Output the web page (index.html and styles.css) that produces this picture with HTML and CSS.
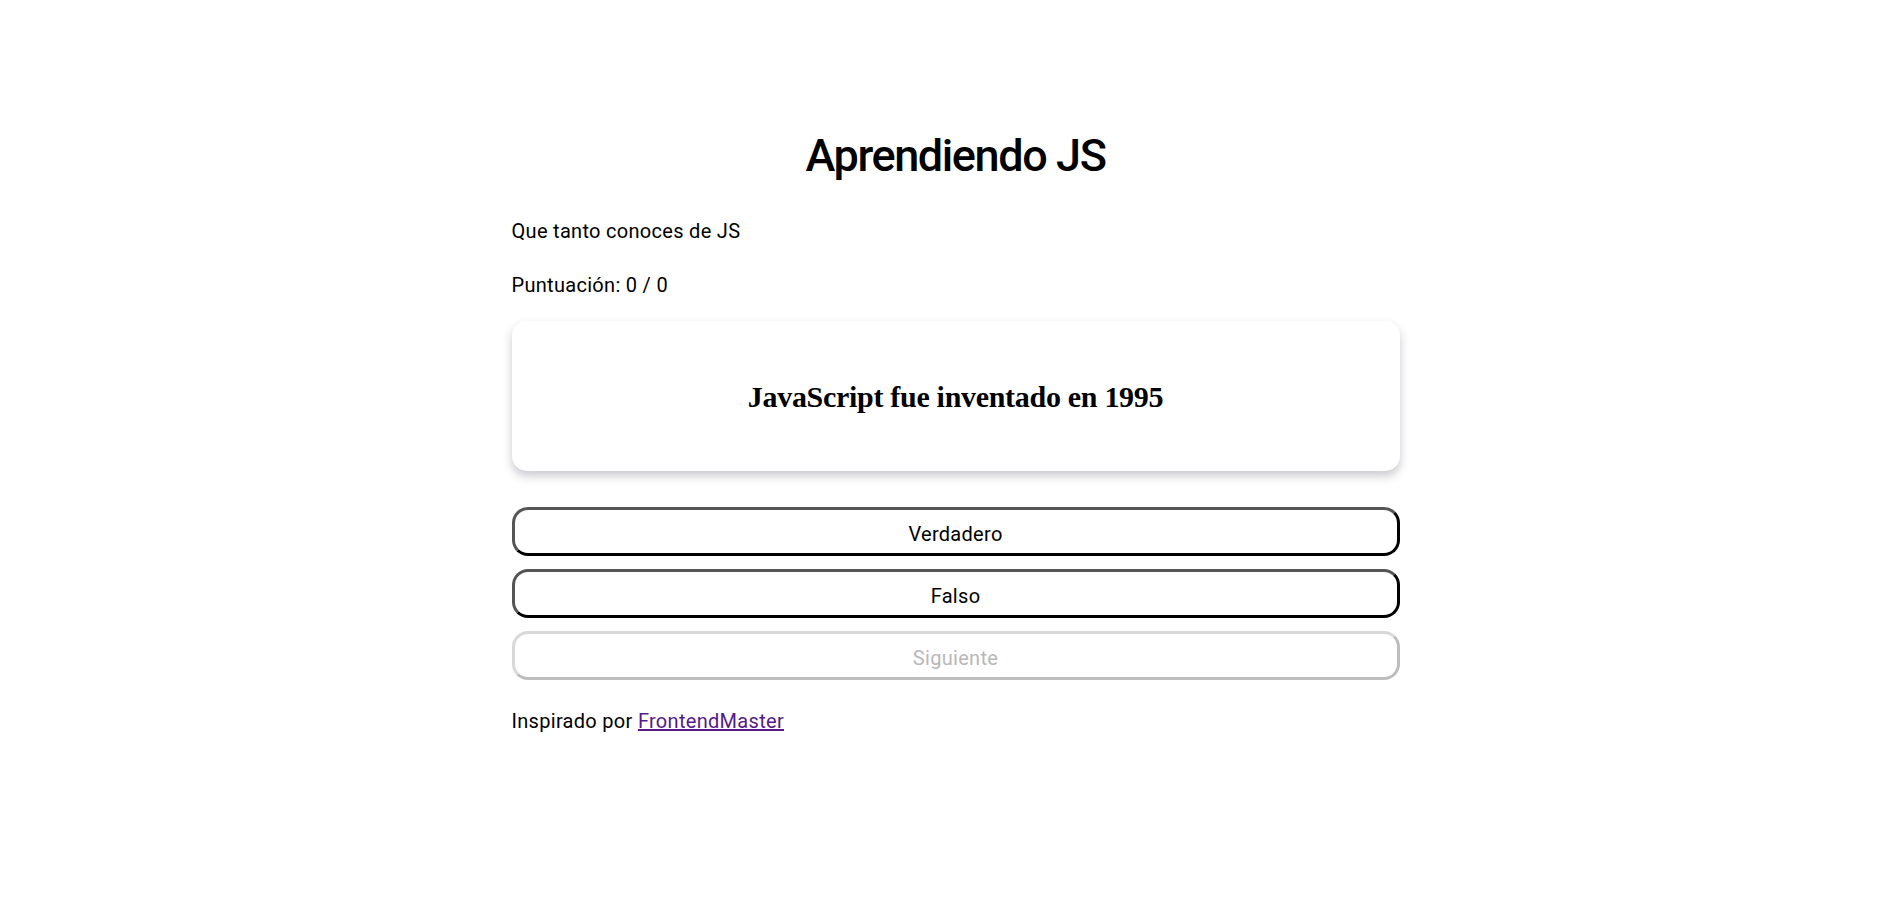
FILE: index.html
```html
<!DOCTYPE html>
<html lang="es">
<head>
<meta charset="utf-8">
<title>Aprendiendo JS</title>
<link rel="stylesheet" href="styles.css">
</head>
<body>
<main class="quiz">
  <h1 class="quiz-title">Aprendiendo JS</h1>
  <p class="quiz-subtitle">Que tanto conoces de JS</p>
  <p class="quiz-score">Puntuación: 0 / 0</p>
  <section class="question-card">
    <h2 class="question-text">JavaScript fue inventado en 1995</h2>
  </section>
  <div class="actions">
    <button class="btn">Verdadero</button>
    <button class="btn">Falso</button>
    <button class="btn" disabled>Siguiente</button>
  </div>
  <p class="credit">Inspirado por <a class="credit-link" href="#">FrontendMaster</a></p>
</main>
</body>
</html>
```

FILE: styles.css
```css
html, body {
  background: #ffffff;
}
body {
  margin: 0;
  padding-left: 8px;
  font-family: Roboto, "Noto Sans", sans-serif;
  color: #000;
}
.quiz {
  width: 888px;
  margin: 0 auto;
  display: flex;
  flex-direction: column;
}
.quiz-title {
  margin: 128px 0 0;
  font-size: 45px;
  line-height: 56px;
  font-weight: 500;
  text-align: center;
  letter-spacing: -1.4px;
}
.quiz-subtitle {
  margin: 35px 0 0;
  font-size: 20px;
  line-height: 24px;
  letter-spacing: 0.3px;
}
.quiz-score {
  margin: 30px 0 0;
  font-size: 20px;
  line-height: 24px;
  letter-spacing: 0.3px;
}
.question-card {
  margin-top: 24px;
  height: 150px;
  border-radius: 15px;
  background: #fff;
  box-shadow: 0 5px 10px rgba(40, 40, 70, 0.25);
  display: flex;
  align-items: center;
  justify-content: center;
}
.question-text {
  margin: 0;
  padding-top: 2px;
  font-family: "Liberation Serif", "DejaVu Serif", serif;
  font-weight: 700;
  font-size: 30px;
  letter-spacing: -0.3px;
}
.actions {
  margin-top: 36px;
  display: flex;
  flex-direction: column;
  gap: 13px;
}
.btn {
  height: 49px;
  border-radius: 16px;
  border-width: 3px;
  border-style: solid;
  border-color: #555 #000 #000 #555;
  background: #fff;
  color: #000;
  font-family: Roboto, "Noto Sans", sans-serif;
  font-size: 20px;
  letter-spacing: 0.3px;
  padding: 4px 0 0;
}
.btn:disabled {
  border-color: #d8d8d8 #bdbdbd #bdbdbd #d8d8d8;
  color: #b8b8b8;
}
.credit {
  margin: 29px 0 0;
  font-size: 20px;
  line-height: 24px;
  letter-spacing: 0.3px;
}
.credit-link {
  color: #551a8b;
}
```
